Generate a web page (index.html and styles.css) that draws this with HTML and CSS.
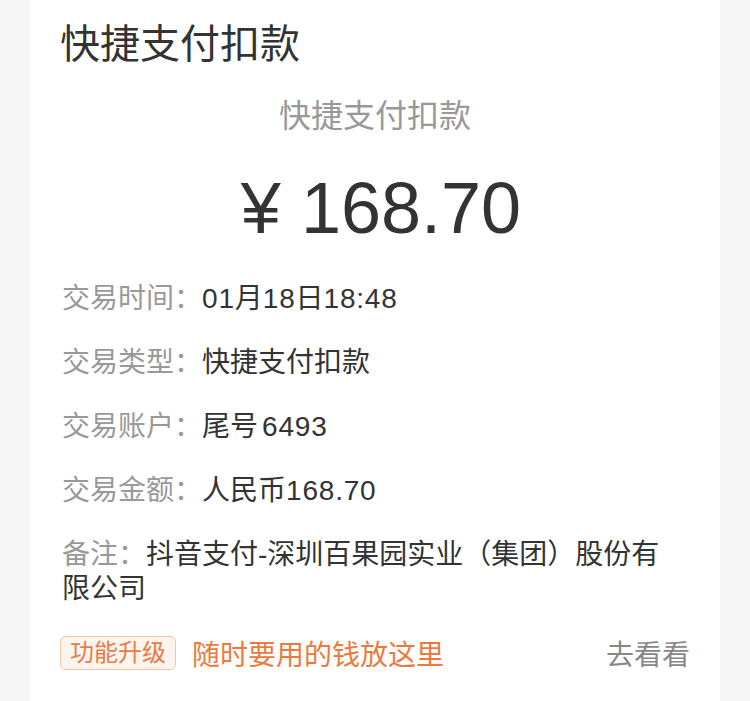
FILE: index.html
```html
<!DOCTYPE html>
<html>
<head>
    <meta charset="utf-8">
    <link rel="stylesheet" href="styles.css">
</head>
<body>
    <div class="page">
        <div class="card">
            <div class="title">快捷支付扣款</div>
            <div class="subtitle">快捷支付扣款</div>
            <div class="amount">¥ 168.70</div>

            <!-- 交易信息 -->
            <div class="rows">
                <div class="row"><span class="label">交易时间：</span><span class="value"><span class="num">01</span>月<span class="num">18</span>日<span class="num">18:48</span></span></div>
                <div class="row"><span class="label">交易类型：</span><span class="value">快捷支付扣款</span></div>
                <div class="row"><span class="label">交易账户：</span><span class="value">尾号<span class="num gap">6493</span></span></div>
                <div class="row"><span class="label">交易金额：</span><span class="value">人民币<span class="num">168.70</span></span></div>
                <div class="row note"><span class="label">备注：</span><span class="value">抖音支付-深圳百果园实业（集团）股份有限公司</span></div>
            </div>

            <div class="promo">
                <span class="badge">功能升级</span>
                <span class="promotext">随时要用的钱放这里</span>
                <span class="more">去看看</span>
            </div>
        </div>
    </div>
</body>
</html>
```

FILE: styles.css
```css
body { margin:0; background-color:#f7f7f7; font-family:"Liberation Sans", "Noto Sans CJK SC", sans-serif; }

.page { padding:0 30px; }
.card { background-color:#fff; min-height:701px; box-sizing:border-box; padding:20px 32px 0 32px; }

.title { font-size:40px; line-height:48px; color:#333; margin-left:-2px; }
.subtitle { margin-top:28px; font-size:32px; line-height:40px; color:#999; text-align:center; }
.amount { margin-top:32px; font-size:72px; line-height:80px; color:#333; text-align:center; padding-left:12px; }

.rows { margin-top:34px; display:flex; flex-direction:column; gap:30px; }
.row { font-size:28px; line-height:34px; }
.row .label { color:#999; }
.row .value { color:#333; }
.num { letter-spacing:0.8px; }
.gap { margin-left:4px; }
.note { padding-right:14px; }

.promo { margin-top:30px; display:flex; align-items:center; height:34px; }
.badge { font-size:24px; line-height:32px; color:#e97c45; background-color:#fff5ef; border:1px solid #f3c3a6; border-radius:6px; padding:0 9px; margin-left:-2px; }
.promotext { margin-left:16px; font-size:28px; color:#ec7a3e; }
.more { margin-left:auto; margin-right:-2px; font-size:28px; color:#888; }
```
